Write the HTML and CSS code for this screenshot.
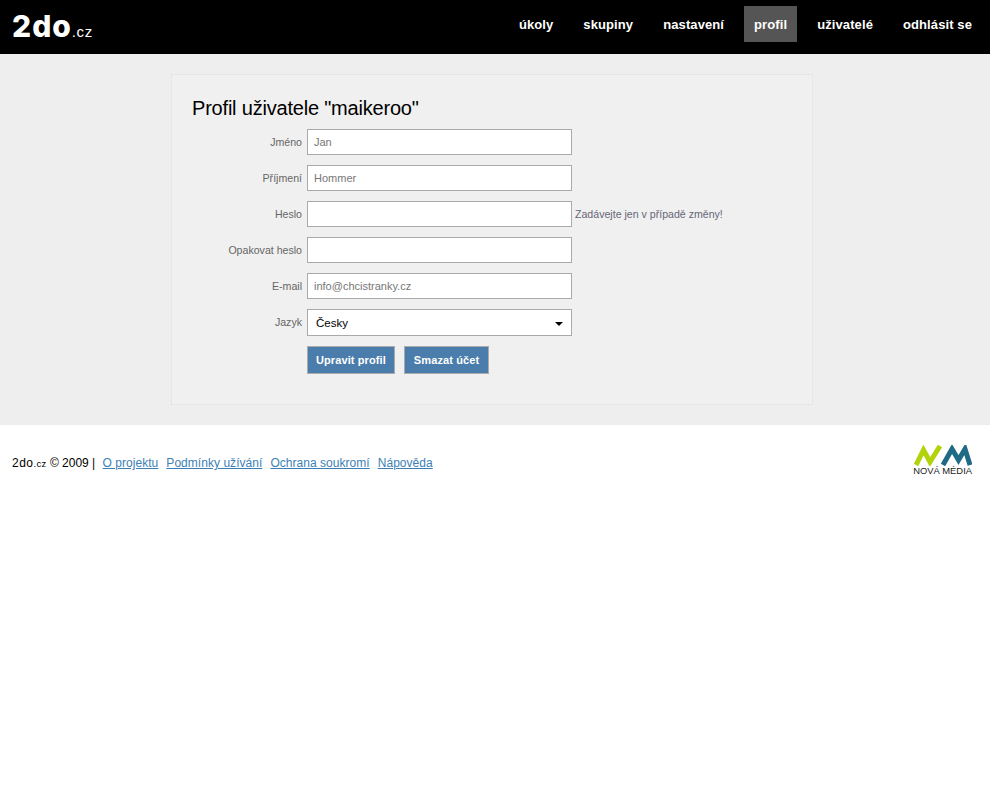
FILE: index.html
```html
<!DOCTYPE html>
<html lang="cs">
<head>
<meta charset="utf-8">
<title>Profil uživatele</title>
<link rel="stylesheet" href="styles.css">
</head>
<body>
<header class="topbar">
  <a class="logo" href="#"><span class="logo-main">2do</span><span class="logo-tld">.cz</span></a>
  <nav class="menu">
    <a href="#">úkoly</a>
    <a href="#">skupiny</a>
    <a href="#">nastavení</a>
    <a href="#" class="active">profil</a>
    <a href="#">uživatelé</a>
    <a href="#">odhlásit se</a>
  </nav>
</header>
<main class="content">
  <section class="card">
    <h1>Profil uživatele "maikeroo"</h1>
    <form class="form">
      <label>Jméno</label><input class="field" type="text" value="Jan"><span></span>
      <label>Příjmení</label><input class="field" type="text" value="Hommer"><span></span>
      <label>Heslo</label><input class="field" type="password"><span class="hint">Zadávejte jen v případě změny!</span>
      <label>Opakovat heslo</label><input class="field" type="password"><span></span>
      <label>E-mail</label><input class="field" type="text" value="info@chcistranky.cz"><span></span>
      <label>Jazyk</label><div class="select-wrap"><select class="select"><option>Česky</option></select></div><span></span>
      <span></span><div class="buttons"><button type="button">Upravit profil</button><button type="button" class="danger">Smazat účet</button></div>
    </form>
  </section>
</main>
<footer class="footer">
  <div class="footer-text"><span class="brand">2do</span><span class="tld">.cz</span> © 2009 | <a href="#">O projektu</a><a href="#">Podmínky užívání</a><a href="#">Ochrana soukromí</a><a href="#">Nápověda</a></div>
  <div class="nm">
    <svg width="58" height="21" viewBox="0 0 58 21" aria-hidden="true">
      <path d="M2 20 9.500 5 16 17 26 1" fill="none" stroke="#b2d30c" stroke-width="5"/>
      <path d="M29 20 38 4 44.500 15 51 4 56 20" fill="none" stroke="#1f6a85" stroke-width="5"/>
    </svg>
    <span>NOVÁ MÉDIA</span>
  </div>
</footer>
</body>
</html>
```
FILE: styles.css
```css
* { box-sizing: border-box; }
html, body { margin: 0; padding: 0; }
body { background: #fff; font-family: "Liberation Sans", Arial, sans-serif; color: #000; font-size: 12px; }

.topbar { height: 54px; background: #000; display: flex; justify-content: space-between; align-items: flex-start; padding: 0 8px 0 12px; }
.logo { display: flex; align-items: baseline; color: #fff; text-decoration: none; margin-top: 8px; }
.logo-main { font-family: Inter, sans-serif; font-weight: 800; font-size: 30px; line-height: 36px; letter-spacing: 1px; }
.logo-tld { font-family: "Liberation Sans", sans-serif; font-size: 15px; letter-spacing: 0.6px; }

.menu { display: flex; margin-top: 6px; }
.menu a { display: block; height: 36px; line-height: 37px; padding: 0 10px; margin-left: 10px; color: #fff; font-weight: 700; font-size: 13px; letter-spacing: 0.1px; text-decoration: none; }
.menu a.active { background: #555; }

.content { background: #eee; height: 371px; padding-top: 20px; }
.card { width: 642px; height: 331px; margin: 0 0 0 171px; background: #f0f0f0; border: 1px dotted #ddd; padding: 21px 20px 0; }
h1 { margin: 0; font-size: 20px; font-weight: 400; line-height: 24px; letter-spacing: -0.2px; }

.form { display: grid; grid-template-columns: 110px 265px 1fr; column-gap: 5px; row-gap: 10px; margin: 9px 0 0 0; align-items: center; grid-auto-rows: 26px; }
label { text-align: right; color: #666; font-size: 10.6px; }
.field { width: 265px; height: 26px; border: 1px solid #aaa; background: #fff; padding: 0 6px; color: #777; font: 11px "Liberation Sans", Arial, sans-serif; border-radius: 0; outline: 0; }
.hint { color: #667; font-size: 10.6px; margin-left: -2px; }
.select-wrap { position: relative; width: 265px; height: 27px; }
.select-wrap::after { content: ""; position: absolute; right: 9px; top: 13px; border: 4px solid transparent; border-top-color: #000; border-bottom: 0; }
.select { appearance: none; width: 265px; height: 27px; border: 1px solid #aaa; background: #fff; padding: 1px 8px 0; font: 11.5px "Liberation Sans", Arial, sans-serif; color: #000; border-radius: 0; }
.buttons { display: flex; gap: 9px; align-self: start; margin-top: 1px; }
button { height: 28px; padding: 0 8px; border: 1px solid #aaa; background: #4a7dac; color: #fff; font: 700 11px "Liberation Sans", Arial, sans-serif; letter-spacing: 0.1px; border-radius: 0; }
button.danger { padding: 0 9px; }

.footer { display: flex; justify-content: space-between; padding: 20px 18px 0 12px; }
.footer-text { margin-top: 11px; line-height: 14px; }
.footer-text a { color: #3d7fb5; margin-left: 8px; letter-spacing: 0.04px; }
.footer-text a:first-of-type { margin-left: 4px; }
.brand { letter-spacing: 0.5px; }
.tld { font-size: 9.5px; letter-spacing: 0.3px; }
.nm { display: flex; flex-direction: column; align-items: center; color: #222; font-size: 9.4px; line-height: 10px; }
.nm svg { display: block; }
```
